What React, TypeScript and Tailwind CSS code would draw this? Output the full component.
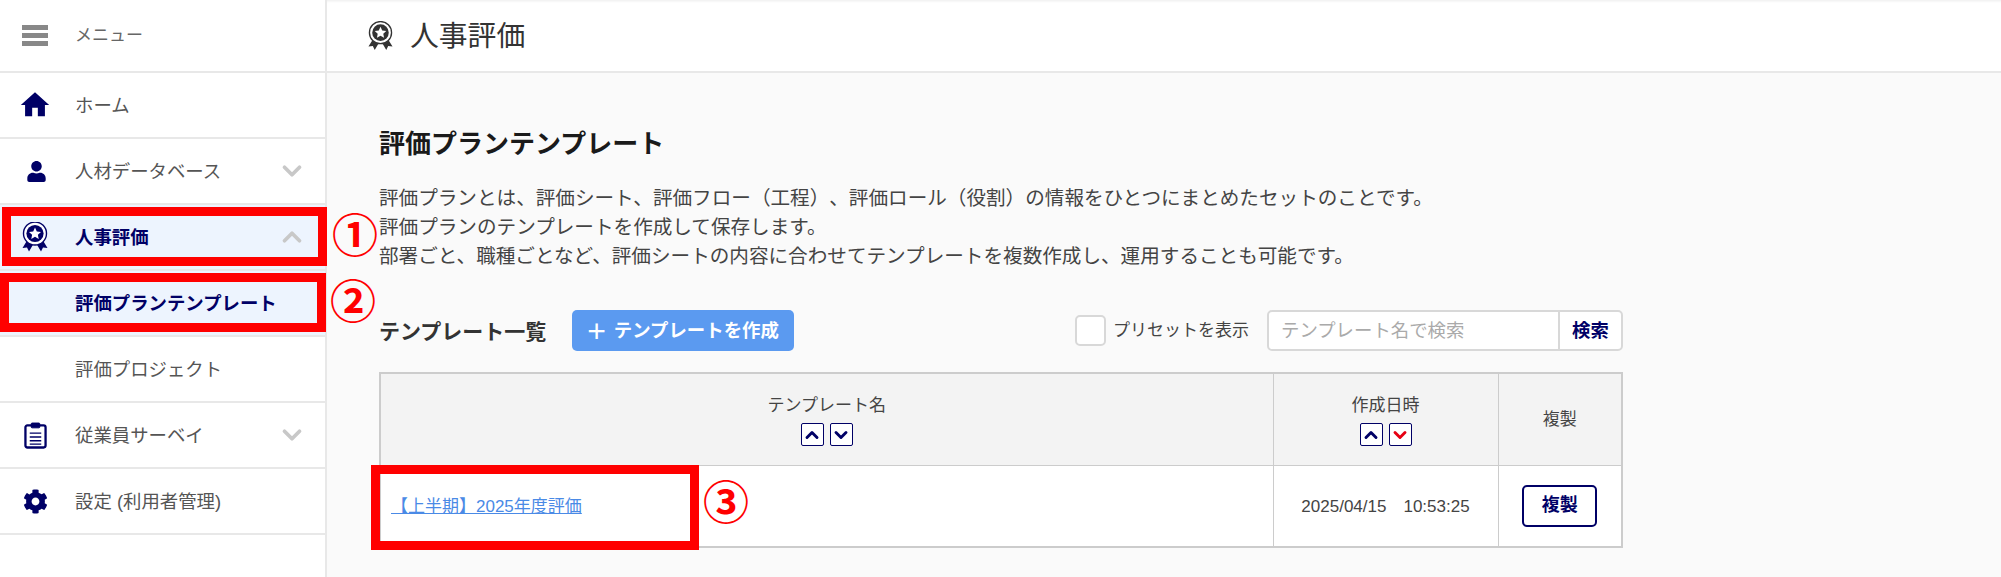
import { FaCog, FaUser } from 'react-icons/fa'
import { FiChevronDown, FiChevronUp } from 'react-icons/fi'
import { MdHome } from 'react-icons/md'

const font = 'font-["Liberation_Sans","Noto_Sans_CJK_JP",sans-serif]'

function Award({ className }: { className: string }) {
    return (
        <svg viewBox="0 0 26 30" className={className} fill="currentColor">
            <path d="M6 17 L0.5 26 L5 25.5 L7 29.5 L12 21 Z" />
            <path d="M20 17 L25.5 26 L21 25.5 L19 29.5 L14 21 Z" />
            <circle cx="13" cy="11.5" r="11.5" fill="#ffffff" />
            <circle cx="13" cy="11.5" r="11.5" fill="none" stroke="currentColor" strokeWidth="1.4" />
            <circle cx="13" cy="11.5" r="8.6" />
            <path fill="#ffffff" d="M13 5.5 L14.8 9.4 L19 9.9 L15.9 12.7 L16.7 16.9 L13 14.8 L9.3 16.9 L10.1 12.7 L7 9.9 L11.2 9.4 Z" />
        </svg>
    )
}

function Clipboard({ className }: { className: string }) {
    return (
        <svg viewBox="0 0 24 28" className={className} fill="none" stroke="currentColor">
            <rect x="1.5" y="3.5" width="21" height="23" rx="2" strokeWidth="2.4" />
            <rect x="7.5" y="1" width="9" height="5" rx="1" fill="currentColor" strokeWidth="1" />
            <path d="M6 11.5h12M6 15.5h12M6 19.5h12M6 23h12" strokeWidth="1.5" />
        </svg>
    )
}

type NavRowProps = {
    icon?: React.ReactNode
    label: string
    chevron?: 'up' | 'down'
    active?: boolean
}

function NavRow({ icon, label, chevron, active }: NavRowProps) {
    return (
        <div className={`flex h-[66px] items-center border-b-2 border-[#e8e8e8] pl-[20px] pr-[18px] ${active ? 'bg-[#edf4fe]' : 'bg-white'}`}>
            <div className="flex w-[55px] shrink-0 items-center text-[#000066]">{icon}</div>
            <span className={`mt-[1px] flex-1 text-[18.4px] ${active ? 'font-bold text-[#000066]' : 'text-[#555555]'}`}>{label}</span>
            {chevron === 'down' && <FiChevronDown className="text-[#c8c8c8]" size={30} strokeWidth={3} />}
            {chevron === 'up' && <FiChevronUp className="text-[#c8c8c8]" size={30} strokeWidth={3} />}
        </div>
    )
}

function SortButtons({ downActive }: { downActive?: boolean }) {
    return (
        <div className="mt-[5px] flex justify-center gap-[6px]">
            <button className="flex h-[23px] w-[23px] items-center justify-center rounded-[2px] border border-[#000066] bg-white text-[#000066]">
                <FiChevronUp size={20} strokeWidth={3.5} />
            </button>
            <button className={`flex h-[23px] w-[23px] items-center justify-center rounded-[2px] border border-[#000066] bg-white ${downActive ? 'text-[#e60012]' : 'text-[#000066]'}`}>
                <FiChevronDown size={20} strokeWidth={3.5} />
            </button>
        </div>
    )
}

export default function App() {
    return (
        <div className={`relative flex h-[577px] w-full overflow-hidden bg-[#fafafa] [text-spacing-trim:space-all] ${font}`}>
            {/* Sidebar */}
            <aside className="w-[327px] shrink-0 border-r-2 border-[#e8e8e8] bg-white">
                <div className="flex h-[73px] items-center border-b-2 border-[#e8e8e8] pl-[22px]">
                    <div className="mr-[27px] flex w-[26px] flex-col gap-[3px]">
                        <div className="h-[5px] bg-[#888888]" />
                        <div className="h-[5px] bg-[#888888]" />
                        <div className="h-[5px] bg-[#888888]" />
                    </div>
                    <span className="text-[17px] text-[#666666]">メニュー</span>
                </div>
                <NavRow icon={<MdHome size={34} className="-ml-[2px]" />} label="ホーム" />
                <NavRow icon={<FaUser size={21} className="ml-[6px]" />} label="人材データベース" chevron="down" />
                <NavRow icon={<Award className="ml-[2px] h-[30px] w-[26px]" />} label="人事評価" chevron="up" active />
                <NavRow label="評価プランテンプレート" active />
                <NavRow label="評価プロジェクト" />
                <NavRow icon={<Clipboard className="ml-[4px] h-[27px] w-[23px]" />} label="従業員サーベイ" chevron="down" />
                <NavRow icon={<FaCog size={25} className="ml-[3px]" />} label="設定 (利用者管理)" />
            </aside>

            {/* Main */}
            <main className="min-w-0 flex-1">
                <div className="flex h-[73px] items-center border-b-2 border-[#e8e8e8] bg-white pl-[41px] shadow-[inset_0_3px_3px_-2px_rgba(0,0,0,0.08)]">
                    <Award className="mr-[17px] h-[30px] w-[25px] text-[#333333]" />
                    <h1 className="mt-[3px] text-[28.8px] font-normal text-[#333333]">人事評価</h1>
                </div>
                <div className="w-[1296px] pl-[52px] pt-[52px]">
                    <h2 className="text-[26px] leading-[38px] font-bold text-[#1a1a1a]">評価プランテンプレート</h2>
                    <div className="mt-[21px] text-[19.6px] leading-[29px] text-[#444444]">
                        <p>評価プランとは、評価シート、評価フロー（工程）、評価ロール（役割）の情報をひとつにまとめたセットのことです。</p>
                        <p>評価プランのテンプレートを作成して保存します。</p>
                        <p>部署ごと、職種ごとなど、評価シートの内容に合わせてテンプレートを複数作成し、運用することも可能です。</p>
                    </div>

                    <div className="mt-[39px] flex w-[1244px] items-center">
                        <h3 className="mt-[3px] w-[193px] text-[21px] font-bold text-[#333333]">テンプレート一覧</h3>
                        <button className="flex h-[41px] w-[222px] items-center justify-center rounded-[5px] bg-[#5b9af0] text-[18.4px] font-bold text-white">
                            <span className="mr-[8px] text-[32px] font-normal leading-none">+</span>テンプレートを作成
                        </button>
                        <label className="ml-auto flex items-center text-[17px] text-[#444444]">
                            <span className="mr-[7px] h-[31px] w-[31px] rounded-[5px] border-2 border-[#d8d8d8] bg-white" />
                            プリセットを表示
                        </label>
                        <div className="ml-[18px] flex h-[41px] w-[356px] overflow-hidden rounded-[5px] border-2 border-[#d8d8d8] bg-white">
                            <input placeholder="テンプレート名で検索" className="min-w-0 flex-1 px-[12px] text-[18.4px] outline-none placeholder:text-[#aaaaaa]" />
                            <button className="w-[63px] border-l-2 border-[#d8d8d8] text-[18.4px] font-bold text-[#000066]">検索</button>
                        </div>
                    </div>

                    <table className="mt-[21px] w-[1244px] table-fixed border-collapse border-2 border-[#cccccc] text-[#444444]">
                        <thead>
                            <tr className="h-[92px] bg-[#f3f3f3] text-[17px] font-normal">
                                <th className="border border-[#cccccc] font-normal">
                                    テンプレート名
                                    <SortButtons />
                                </th>
                                <th className="w-[225px] border border-[#cccccc] font-normal">
                                    作成日時
                                    <SortButtons downActive />
                                </th>
                                <th className="w-[124px] border border-[#cccccc] font-normal">複製</th>
                            </tr>
                        </thead>
                        <tbody>
                            <tr className="h-[82px] bg-white">
                                <td className="border border-[#cccccc] pl-[10px] pt-[2px] text-[17px]">
                                    <a href="#" className="text-[#4a8ae6] underline">【上半期】2025年度評価</a>
                                </td>
                                <td className="border border-[#cccccc] pt-[2px] text-center text-[17px]">2025/04/15　10:53:25</td>
                                <td className="border border-[#cccccc] text-center">
                                    <button className="h-[42px] w-[75px] rounded-[5px] border-2 border-[#000066] bg-white text-[18px] font-bold text-[#000066]">複製</button>
                                </td>
                            </tr>
                        </tbody>
                    </table>
                </div>
            </main>

            {/* Annotations */}
            <div className="pointer-events-none absolute left-[2px] top-[207px] h-[59px] w-[325px] border-[9px] border-[#ff0000]" />
            <div className="pointer-events-none absolute left-0 top-[273px] h-[59px] w-[326px] border-[9px] border-[#ff0000]" />
            <div className="pointer-events-none absolute left-[371px] top-[465px] h-[85px] w-[328px] border-[9px] border-[#ff0000]" />
            <span className="absolute left-[332px] top-[206px] text-[46px] leading-[60px] font-bold text-[#ff0000]">①</span>
            <span className="absolute left-[330px] top-[272px] text-[46px] leading-[60px] font-bold text-[#ff0000]">②</span>
            <span className="absolute left-[703px] top-[473px] text-[46px] leading-[60px] font-bold text-[#ff0000]">③</span>
        </div>
    )
}
